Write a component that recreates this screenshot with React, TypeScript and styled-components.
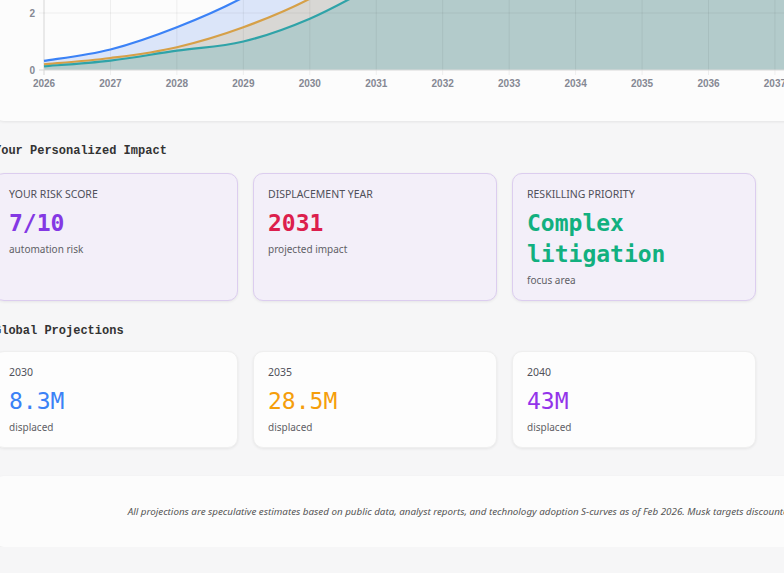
import * as React from "react";
import styled, { createGlobalStyle } from "styled-components";

const GlobalStyle = createGlobalStyle`
  html, body {
    margin: 0;
    padding: 0;
    background: #f6f6f7;
    overflow: hidden;
  }
`;

const Page = styled.div`
  width: 1021px;
  margin: -170px 0 0 -6px;
  font-family: "Noto Sans", "Open Sans", sans-serif;
  color: #333;
`;

const Panel = styled.div`
  background: #fcfcfc;
  border-radius: 10px;
  box-shadow: 0 1px 3px rgba(0, 0, 0, 0.08);
`;

const ChartPanel = styled(Panel)`
  padding: 20px 20px 21px;
`;

const SectionTitle = styled.h3<{ $top: number; $bottom: number }>`
  margin: ${(p) => p.$top}px 0 ${(p) => p.$bottom}px;
  font-family: "Liberation Mono", "Courier New", monospace;
  font-size: 12px;
  line-height: 15px;
  font-weight: 700;
  color: #333;
`;

const CardGrid = styled.div`
  display: grid;
  grid-template-columns: repeat(auto-fill, minmax(220px, 1fr));
  gap: 15px;
`;

const Card = styled.div<{ $tone: "lavender" | "plain" }>`
  border-radius: 10px;
  padding: 14px 14px 13px;
  border: 1px solid ${(p) => (p.$tone === "lavender" ? "#dccdef" : "#efefef")};
  background: ${(p) => (p.$tone === "lavender" ? "#f3eff9" : "#fdfdfd")};
  box-shadow: 0 1px 3px rgba(0, 0, 0, 0.07);
`;

const CardLabel = styled.div<{ $upper?: boolean }>`
  font-size: 10.5px;
  line-height: 13px;
  color: #50505a;
  text-transform: ${(p) => (p.$upper ? "uppercase" : "none")};
`;

const CardValue = styled.div<{ $color: string; $bold?: boolean }>`
  margin-top: 7px;
  font-family: "DejaVu Sans Mono", "Liberation Mono", monospace;
  font-size: 23px;
  line-height: 31px;
  font-weight: ${(p) => (p.$bold ? 700 : 400)};
  color: ${(p) => p.$color};
`;

const CardNote = styled.div`
  margin-top: 4px;
  font-size: 10px;
  line-height: 13px;
  color: #5f5f66;
`;

const FooterPanel = styled(Panel)`
  margin-top: 28px;
  padding: 28px 20px;
  text-align: center;
`;

const FooterText = styled.p`
  margin: 0;
  font-size: 9.8px;
  line-height: 15px;
  font-style: italic;
  color: #555;
  white-space: nowrap;
`;

// chart geometry
const AXIS_X = 30;
const AXIS_Y = 220;
const STEP = 66.45;
const UNIT = 28.5;
const YEARS = Array.from({ length: 15 }, (_, i) => 2026 + i);

const series = [
  {
    line: "#3b82f6",
    fill: "#dbe5f9",
    values: [0.32, 0.72, 1.5, 2.55, 4, 5.6, 7, 8.2, 9, 9.6, 10, 10.3, 10.5, 10.7, 10.8],
  },
  {
    line: "#d6a048",
    fill: "#d8d7d4",
    values: [0.2, 0.42, 0.8, 1.5, 2.5, 3.9, 5.3, 6.6, 7.6, 8.3, 8.8, 9.1, 9.3, 9.5, 9.6],
  },
  {
    line: "#2fa3a8",
    fill: "#b3cbcb",
    values: [0.13, 0.33, 0.68, 1.0, 1.8, 3.0, 4.3, 5.6, 6.6, 7.4, 7.9, 8.3, 8.5, 8.7, 8.8],
  },
];

const px = (i: number) => AXIS_X + i * STEP;
const py = (v: number) => AXIS_Y - v * UNIT;

function curve(values: number[]) {
  const pts = values.map((v, i) => [px(i), py(v)]);
  const t = 0.18;
  let d = `M${pts[0][0]},${pts[0][1]}`;
  for (let i = 0; i < pts.length - 1; i++) {
    const p0 = pts[i - 1] || pts[i];
    const p1 = pts[i];
    const p2 = pts[i + 1];
    const p3 = pts[i + 2] || p2;
    const c1x = p1[0] + (p2[0] - p0[0]) * t;
    const c1y = p1[1] + (p2[1] - p0[1]) * t;
    const c2x = p2[0] - (p3[0] - p1[0]) * t;
    const c2y = p2[1] - (p3[1] - p1[1]) * t;
    d += ` C${c1x},${c1y} ${c2x},${c2y} ${p2[0]},${p2[1]}`;
  }
  return d;
}

function Chart() {
  const last = px(YEARS.length - 1);
  return (
    <svg width={981} height={250} style={{ display: "block" }}>
      {series.map((s) => (
        <path
          key={s.fill}
          d={`${curve(s.values)} L${last},${AXIS_Y} L${AXIS_X},${AXIS_Y} Z`}
          fill={s.fill}
        />
      ))}
      {YEARS.map((year, i) => (
        <line
          key={year}
          x1={px(i)}
          x2={px(i)}
          y1={0}
          y2={AXIS_Y + 5}
          stroke={i === 0 ? "#d6d6d6" : "rgba(0,0,0,0.06)"}
        />
      ))}
      {[2, 4, 6].map((v) => (
        <line key={v} x1={AXIS_X - 5} x2={last} y1={py(v)} y2={py(v)} stroke="rgba(0,0,0,0.06)" />
      ))}
      <line x1={AXIS_X - 5} x2={last} y1={AXIS_Y} y2={AXIS_Y} stroke="#d8d8d8" />
      {series.map((s) => (
        <path key={s.line} d={curve(s.values)} fill="none" stroke={s.line} strokeWidth={2.2} />
      ))}
      <g fontFamily="Liberation Sans, Arial, sans-serif" fontSize={10} fontWeight={700} fill="#858893">
        {[0, 2, 4, 6].map((v) => (
          <text key={v} x={AXIS_X - 9} y={py(v) + 3.5} textAnchor="end">
            {v}
          </text>
        ))}
        {YEARS.map((year, i) => (
          <text key={year} x={px(i)} y={AXIS_Y + 16.5} textAnchor="middle">
            {year}
          </text>
        ))}
      </g>
    </svg>
  );
}

const impact = [
  { label: "Your risk score", value: "7/10", color: "#8438e4", note: "automation risk" },
  { label: "Displacement year", value: "2031", color: "#dc1f4d", note: "projected impact" },
  { label: "Reskilling priority", value: "Complex litigation", color: "#12b07f", note: "focus area" },
];

const projections = [
  { year: "2030", value: "8.3M", color: "#3b82f6" },
  { year: "2035", value: "28.5M", color: "#f59e0b" },
  { year: "2040", value: "43M", color: "#9333ea" },
];

export default function App() {
  return (
    <>
      <GlobalStyle />
      <Page>
        <ChartPanel>
          <Chart />
        </ChartPanel>

        <SectionTitle $top={23} $bottom={14}>Your Personalized Impact</SectionTitle>
        <CardGrid>
          {impact.map((item) => (
            <Card key={item.label} $tone="lavender">
              <CardLabel $upper>{item.label}</CardLabel>
              <CardValue $color={item.color} $bold>
                {item.value}
              </CardValue>
              <CardNote>{item.note}</CardNote>
            </Card>
          ))}
        </CardGrid>

        <SectionTitle $top={23} $bottom={12}>Global Projections</SectionTitle>
        <CardGrid>
          {projections.map((item) => (
            <Card key={item.year} $tone="plain">
              <CardLabel>{item.year}</CardLabel>
              <CardValue $color={item.color}>{item.value}</CardValue>
              <CardNote>displaced</CardNote>
            </Card>
          ))}
        </CardGrid>

        <FooterPanel>
          <FooterText>
            All projections are speculative estimates based on public data, analyst reports, and
            technology adoption S-curves as of Feb 2026. Musk targets discounted 40% for timing risk.
          </FooterText>
        </FooterPanel>
      </Page>
    </>
  );
}
